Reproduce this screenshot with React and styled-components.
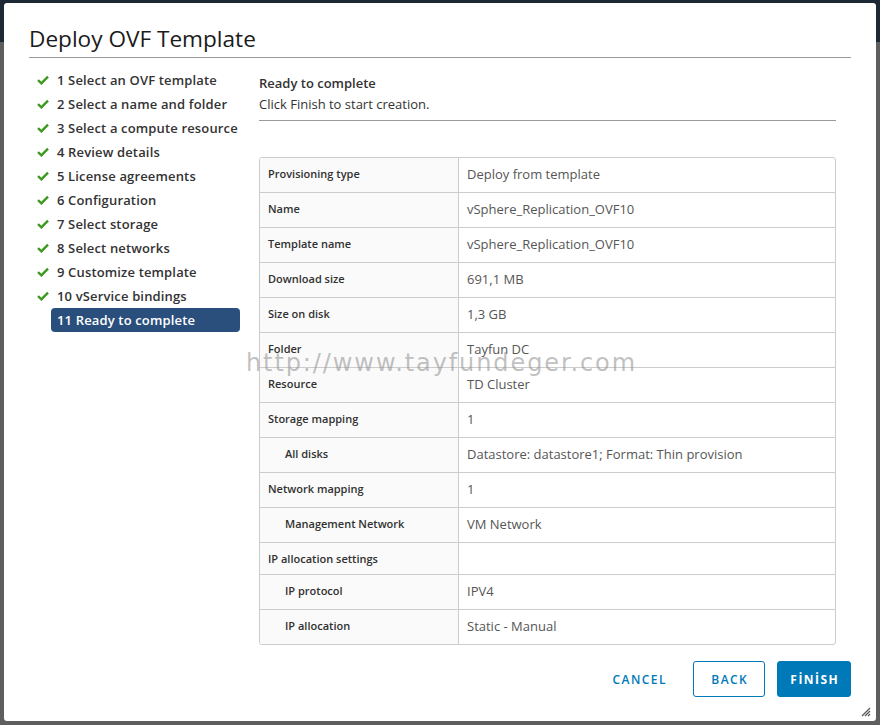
import React from 'react'
import styled, { createGlobalStyle } from 'styled-components'

const GlobalStyle = createGlobalStyle`
    html, body {
        margin: 0;
        padding: 0;
    }
    body {
        min-height: 725px;
        background: linear-gradient(#1c2833 0, #1c2833 42px, #5e5e5e 42px);
        font-family: "Open Sans", "Lato", sans-serif;
    }
`

const Dialog = styled.div`
    position: relative;
    box-sizing: border-box;
    margin: 3px 0 0 4px;
    width: 872px;
    height: 718px;
    padding: 0 25px 24px 25px;
    background: #ffffff;
    border-radius: 3px;
    display: flex;
    flex-direction: column;
`

const Title = styled.h1`
    margin: 0;
    padding: 22px 0 4px 0;
    font-size: 22.6px;
    line-height: 28px;
    font-weight: 400;
    color: #1b1b1b;
    border-bottom: 1px solid #9a9a9a;
`

const Body = styled.div`
    flex: 1;
    display: flex;
    gap: 19px;
    padding-top: 10px;
`

const Steps = styled.ul`
    margin: 0;
    padding: 0;
    list-style: none;
    width: 211px;
    flex: 0 0 211px;
`

const Step = styled.li`
    display: flex;
    align-items: center;
    height: 24px;
`

const CheckSlot = styled.span`
    width: 22px;
    flex: 0 0 22px;
    display: flex;
    justify-content: flex-end;
    padding-right: 2px;
    box-sizing: border-box;
`

const StepLabel = styled.span`
    flex: 1;
    height: 24px;
    line-height: 24px;
    padding-left: 6px;
    border-radius: 4px;
    font-size: 13px;
    font-weight: 600;
    letter-spacing: 0.15px;
    white-space: nowrap;
    color: ${({active}) => (active ? '#ffffff' : '#333333')};
    background: ${({active}) => (active ? '#2b4f7c' : 'transparent')};
`

const Content = styled.div`
    flex: 0 0 577px;
    width: 577px;
`

const Heading = styled.div`
    margin-top: 4px;
    font-size: 13px;
    line-height: 22px;
    font-weight: 600;
    color: #333333;
`

const SubText = styled.div`
    font-size: 13px;
    line-height: 20px;
    color: #333333;
    padding-bottom: 6px;
    border-bottom: 1px solid #9a9a9a;
`

const Table = styled.div`
    margin-top: 36px;
    border: 1px solid #cccccc;
    border-radius: 3px;
    overflow: hidden;
`

const Row = styled.div`
    display: grid;
    grid-template-columns: 199px 1fr;
    min-height: ${({short}) => (short ? '31px' : '34px')};
    & + & {
        border-top: 1px solid #cccccc;
    }
`

const Key = styled.div`
    background: #fafafa;
    border-right: 1px solid #cccccc;
    padding: 8px 0 0 ${({indent}) => (indent ? '25px' : '8px')};
    font-size: 11px;
    line-height: 15px;
    font-weight: 600;
    color: #313131;
`

const Value = styled.div`
    padding: 7px 0 0 8px;
    font-size: 13px;
    line-height: 18px;
    color: #565656;
`

const Footer = styled.div`
    display: flex;
    justify-content: flex-end;
    align-items: center;
    gap: 12px;
`

const Button = styled.button`
    box-sizing: border-box;
    height: 36px;
    width: ${({w}) => w}px;
    padding: 0;
    margin-right: ${({flat}) => (flat ? '1px' : '0')};
    font-family: "Open Sans", "Lato", sans-serif;
    font-size: 12px;
    font-weight: ${({primary}) => (primary ? 700 : 600)};
    letter-spacing: 0.12em;
    text-indent: 0.12em;
    border-radius: 3px;
    cursor: pointer;
    color: ${({primary}) => (primary ? '#ffffff' : '#0079b8')};
    background: ${({primary}) => (primary ? '#0079b8' : '#ffffff')};
    border: 1px solid ${({flat}) => (flat ? 'transparent' : '#0079b8')};
`

const Watermark = styled.div`
    position: absolute;
    left: 242px;
    top: 345px;
    font-family: "DejaVu Sans", sans-serif;
    font-size: 24px;
    line-height: 30px;
    letter-spacing: 1.9px;
    color: rgba(140, 140, 140, 0.55);
    pointer-events: none;
    white-space: nowrap;
`

const Grip = styled.svg`
    position: absolute;
    right: 5px;
    bottom: 4px;
`

const steps = [
    '1 Select an OVF template',
    '2 Select a name and folder',
    '3 Select a compute resource',
    '4 Review details',
    '5 License agreements',
    '6 Configuration',
    '7 Select storage',
    '8 Select networks',
    '9 Customize template',
    '10 vService bindings',
    '11 Ready to complete',
]

const rows = [
    { key: 'Provisioning type', value: 'Deploy from template' },
    { key: 'Name', value: 'vSphere_Replication_OVF10' },
    { key: 'Template name', value: 'vSphere_Replication_OVF10' },
    { key: 'Download size', value: '691,1 MB' },
    { key: 'Size on disk', value: '1,3 GB' },
    { key: 'Folder', value: 'Tayfun DC' },
    { key: 'Resource', value: 'TD Cluster' },
    { key: 'Storage mapping', value: '1' },
    { key: 'All disks', value: 'Datastore: datastore1; Format: Thin provision', indent: true },
    { key: 'Network mapping', value: '1' },
    { key: 'Management Network', value: 'VM Network', indent: true },
    { key: 'IP allocation settings', value: '', short: true },
    { key: 'IP protocol', value: 'IPV4', indent: true },
    { key: 'IP allocation', value: 'Static - Manual', indent: true },
]

function Check() {
    return (
        <svg width="12" height="10" viewBox="0 0 12 10">
            <path d="M1 5.2 L4.4 8.4 L11 1.6" fill="none" stroke="#3e9a20" strokeWidth="2.4" strokeLinejoin="miter" />
        </svg>
    )
}

export default function App() {
    return (
        <>
            <GlobalStyle />
            <Dialog>
                <Title>Deploy OVF Template</Title>
                <Body>
                    <Steps>
                        {steps.map((s, i) => {
                            const active = i === steps.length - 1
                            return (
                                <Step key={i}>
                                    <CheckSlot>{active ? null : <Check />}</CheckSlot>
                                    <StepLabel active={active}>{s}</StepLabel>
                                </Step>
                            )
                        })}
                    </Steps>
                    <Content>
                        <Heading>Ready to complete</Heading>
                        <SubText>Click Finish to start creation.</SubText>
                        <Table>
                            {rows.map((r, i) => (
                                <Row key={i} short={r.short}>
                                    <Key indent={r.indent}>{r.key}</Key>
                                    <Value>{r.value}</Value>
                                </Row>
                            ))}
                        </Table>
                    </Content>
                </Body>
                <Footer>
                    <Button flat w={82}>CANCEL</Button>
                    <Button w={72}>BACK</Button>
                    <Button primary w={74}>FİNİSH</Button>
                </Footer>
                <Watermark>http://www.tayfundeger.com</Watermark>
                <Grip width="10" height="10" viewBox="0 0 10 10">
                    <path d="M9 1 L1 9 M9 4 L4 9 M9 7 L7 9" stroke="#555" strokeWidth="1.2" />
                </Grip>
            </Dialog>
        </>
    )
}
